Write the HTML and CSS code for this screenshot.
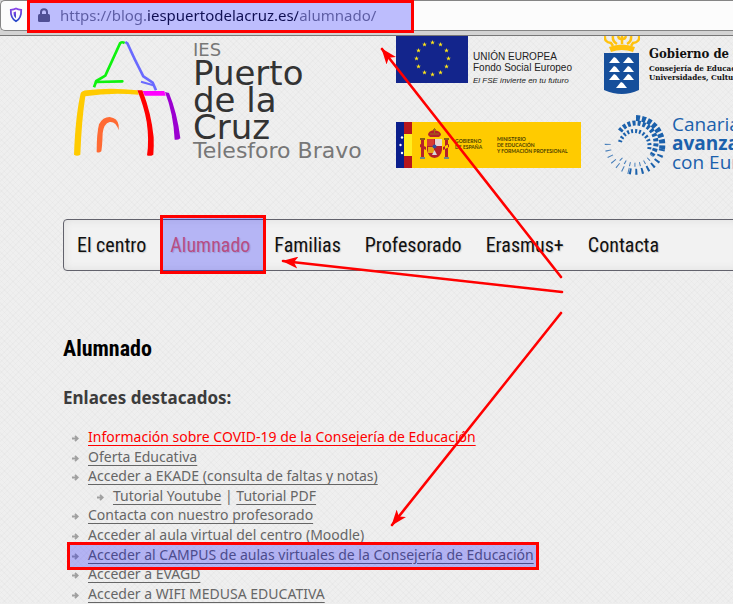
FILE: index.html
```html
<!DOCTYPE html>
<html lang="es">
<head>
<meta charset="utf-8">
<title>Alumnado - IES Puerto de la Cruz</title>
<link rel="stylesheet" href="styles.css">
</head>
<body>
<svg class="defs" aria-hidden="true">
  <symbol id="arrow" viewBox="0 0 7 7"><path d="M0 3.5H5.5M3 .8L5.8 3.5L3 6.2" fill="none" stroke="#a0a0a0" stroke-width="1.8"/></symbol>
  <symbol id="star" viewBox="-5 -5 10 10"><path d="M0-5L1.2-1.6H4.8L1.9.6L3 4L0 1.9L-3 4L-1.9.6L-4.8-1.6H-1.2Z" fill="#ffe619"/></symbol>
</svg>

<form class="toolbar">
  <div class="address">
    <svg class="shield" width="14" height="16" viewBox="0 0 14 16" aria-hidden="true"><defs><linearGradient id="sg" x2="0" y2="1"><stop stop-color="#8a45e8"/><stop offset="1" stop-color="#2448c8"/></linearGradient></defs><path d="M7 1.5C5.5 2.4 3.6 2.8 1.8 2.9C1.6 8.5 2.5 12 7 14.2C11.500 12 12.400 8.500 12.200 2.900C10.400 2.800 8.500 2.400 7 1.500Z" fill="none" stroke="url(#sg)" stroke-width="1.8"/><path d="M7 4.600V11.200C4.800 9.800 4.600 7.800 4.500 5.200Z" fill="url(#sg)"/></svg>
    <svg class="lock" width="12" height="14" viewBox="0 0 12 14" aria-hidden="true"><path d="M3 7V4.200a3 3 0 0 1 6 0V7" fill="none" stroke="#6a6a72" stroke-width="2"/><rect y="6" width="12" height="8" rx="1.500" fill="#6a6a72"/></svg>
    <input class="url" type="text" aria-label="Dirección" value="https://blog.iespuertodelacruz.es/alumnado/">
  </div>
</form>

<div class="page">
  <header class="site-header">
    <a class="brand" href="#">
      <svg width="110" height="121" viewBox="39 18 330 363" fill="none" aria-hidden="true">
        <path d="M194 39Q184 34 180 40L136 137L109 153L102 172" stroke="#0ef20e" stroke-width="8"/>
        <path d="M108 156L187 154" stroke="#0ef20e" stroke-width="8" stroke-linecap="round"/>
        <path d="M196 36L202 40Q224 90 250 139L278 158L288 181" stroke="#6a6aff" stroke-width="8"/>
        <path d="M243 155L280 166" stroke="#6a6aff" stroke-width="6"/>
        <path d="M42 374Q46 260 62 190Q66 182 80 181Q150 172 232 181L236 194Q150 186 76 199Q65 270 61 374Q51 380 42 374Z" fill="#ffcb00"/>
        <path d="M248 183H313L317 197H254Z" fill="#f0f"/>
        <path d="M232 181H247Q274 250 281 322Q282 350 280 374Q270 380 261 376Q268 330 260 275Q252 230 232 181Z" fill="red"/>
        <path d="M315 186L327 189Q352 250 361 325Q353 331 344 329Q340 250 315 186Z" fill="#9b00d0"/>
        <path d="M110 366Q110 310 117 283Q128 261 149 261Q173 264 176 286V301Q168 274 149 276Q131 281 128 310Q127 345 124 364Q117 370 110 366Z" fill="#ff6a33"/>
      </svg>
      <span class="brand-text">
        <span class="brand-top">IES</span>
        <span class="brand-big">Puerto<br>de la<br>Cruz</span>
        <span class="brand-sub">Telesforo Bravo</span>
      </span>
    </a>

    <div class="sponsors sponsors-a">
      <div class="eu">
        <svg width="72" height="47" viewBox="0 0 72 47" aria-hidden="true"><path fill="#13258c" d="M0 0H72V47H0Z"/>
          <g><use href="#star" x="34" y="4" width="5" height="5"/><use href="#star" x="42" y="6" width="5" height="5"/><use href="#star" x="48" y="12" width="5" height="5"/><use href="#star" x="50" y="20" width="5" height="5"/><use href="#star" x="48" y="28" width="5" height="5"/><use href="#star" x="42" y="34" width="5" height="5"/><use href="#star" x="34" y="36" width="5" height="5"/><use href="#star" x="26" y="34" width="5" height="5"/><use href="#star" x="20" y="28" width="5" height="5"/><use href="#star" x="18" y="20" width="5" height="5"/><use href="#star" x="20" y="12" width="5" height="5"/><use href="#star" x="26" y="6" width="5" height="5"/></g></svg>
        <div class="eu-text"><span>UNIÓN EUROPEA</span><span>Fondo Social Europeo</span><em>El FSE invierte en tu futuro</em></div>
      </div>
      <div class="ministry">
        <svg width="59" height="46" viewBox="0 0 59 46" aria-hidden="true">
          <path fill="#0a1e8c" d="M0 0H8V46H0Z"/><path fill="#b8161c" d="M8 0H16V46H8Z"/><path fill="#ffee20" d="M8 12H16V34H8Z"/>
          <g fill="#fff"><circle cx="6" cy="15.500" r="1.200"/><circle cx="4.500" cy="23" r="1.200"/><circle cx="6" cy="31" r="1.200"/></g>
          <g fill="#b5202a"><path d="M32 13Q32 9 38 8Q45 9 45 13L43 15H34Z"/><path d="M31 17H46V28Q45 35 38.500 36Q32 35 31 28Z"/><path d="M25 18H28V35H25ZM49 18H52V35H49ZM24 22L30 25V28L24 25ZM53 22L47 25V28L53 25Z"/></g>
          <path d="M31 17H38V24H31Z" fill="#d83b33"/><path d="M39 17H46V24H39Z" fill="#e6d5d2"/><path d="M32 25H38V31H32Z" fill="#e8a313"/><path d="M36 33L38.500 28L41 33Z" fill="#d8d9d5"/><circle cx="38.500" cy="24.500" r="2" fill="#314f9b"/>
          <path d="M34 12H43M38.500 6V11M37 7.500H40" stroke="#9b7312"/><path d="M24 17H29M48 17H53" stroke="#8b6010" stroke-width="2"/><path d="M24 36H29M48 36H53" stroke="#718c82" stroke-width="2"/>
        </svg>
        <span class="gov">GOBIERNO<br>DE ESPAÑA</span>
        <span>MINISTERIO<br>DE EDUCACIÓN<br>Y FORMACIÓN PROFESIONAL</span>
      </div>
    </div>

    <div class="sponsors sponsors-b">
      <div class="canarias">
        <svg width="36" height="58" viewBox="0 0 36 58" aria-hidden="true">
          <path d="M0 17H35V54Q18 62 0 54Z" fill="#164f9b"/>
          <path d="M5 11Q18 6 31 11L29 16Q18 12 7 16Z" fill="#ffc20e"/>
          <g fill="none" stroke="#ffc20e" stroke-width="2.500"><path d="M9 10L7 7Q0 6 1 0M13 8Q8 5 9 0M18 8V0M23 8Q28 5 27 0M27 10L29 7Q36 6 35 0M14 0Q15 3 17 3M22 0Q21 3 19 3"/></g>
          <g fill="#fff"><path id="isle" d="M5 27L10 21L12 22L16 27Z"/><use href="#isle" x="14"/><use href="#isle" y="9"/><use href="#isle" x="14" y="9"/><use href="#isle" y="17"/><use href="#isle" x="14" y="17"/><use href="#isle" x="7" y="25"/></g>
        </svg>
        <div class="canarias-text"><strong>Gobierno de Canarias</strong><span>Consejería de Educación,</span><span>Universidades, Cultura y Deportes</span></div>
      </div>
      <div class="avanza">
        <svg width="62" height="62" viewBox="-31 -31 62 62" fill="none" stroke="#1b61ac" aria-hidden="true">
          <path d="M1-27A27 27 0 0 1 27 4" stroke-width="6" stroke-dasharray="4 2"/>
          <path d="M27 4A27 27 0 0 1-6 26" stroke-width="6" stroke-dasharray="2 4"/>
          <path d="M-6 26A27 27 0 0 1-27-4" stroke-width="6" stroke-dasharray="1 5" opacity=".8"/>
          <path d="M-15-14A20 20 0 0 1 17 10" stroke-width="5" stroke-dasharray="3 2"/>
          <path d="M17 10A20 20 0 0 1-16 12" stroke-width="4" stroke-dasharray="1 4" opacity=".8"/>
          <path d="M-15-3A15 15 0 0 1 14 5" stroke-width="4" stroke-dasharray="2 2"/>
        </svg>
        <div class="avanza-text">Canarias<br><strong>avanza</strong><br>con Europa</div>
      </div>
    </div>
  </header>

  <nav class="menu">
    <a href="#">El centro</a>
    <a class="current" href="#">Alumnado</a>
    <a href="#">Familias</a>
    <a href="#">Profesorado</a>
    <a href="#">Erasmus+</a>
    <a href="#">Contacta</a>
  </nav>

  <main>
    <h1>Alumnado</h1>
    <h2>Enlaces destacados:</h2>
    <ul>
      <li><svg><use href="#arrow"/></svg><a class="alert" href="#">Información sobre COVID-19 de la Consejería de Educación</a></li>
      <li><svg><use href="#arrow"/></svg><a href="#">Oferta Educativa</a></li>
      <li><svg><use href="#arrow"/></svg><a href="#">Acceder a EKADE (consulta de faltas y notas)</a>
        <ul>
          <li><svg><use href="#arrow"/></svg><a href="#">Tutorial Youtube</a> | <a href="#">Tutorial PDF</a></li>
        </ul>
      </li>
      <li><svg><use href="#arrow"/></svg><a href="#">Contacta con nuestro profesorado</a></li>
      <li><svg><use href="#arrow"/></svg><a href="#">Acceder al aula virtual del centro (Moodle)</a></li>
      <li><svg><use href="#arrow"/></svg><a href="#">Acceder al CAMPUS de aulas virtuales de la Consejería de Educación</a></li>
      <li><svg><use href="#arrow"/></svg><a href="#">Acceder a EVAGD</a></li>
      <li><svg><use href="#arrow"/></svg><a href="#">Acceder a WIFI MEDUSA EDUCATIVA</a></li>
    </ul>
  </main>
</div>

<svg class="notes" width="733" height="604" viewBox="0 0 733 604" aria-hidden="true">
  <defs><marker id="head" viewBox="0 0 16 12" refX="15" refY="6" markerWidth="16" markerHeight="12" markerUnits="userSpaceOnUse" orient="auto"><path d="M16 6L0 0L4 6L0 12Z" fill="red"/></marker></defs>
  <g fill="#00f" fill-opacity=".25" stroke="red" stroke-width="3"><path d="M28.500 1.500H412.500V31.500H28.500Z"/><path d="M161.500 216.500H264.500V272.500H161.500Z"/><path d="M68.500 543.500H537.500V568.500H68.500Z"/></g>
  <g stroke="red" stroke-width="2.600" stroke-linecap="round"><path d="M561 277L382 49" marker-end="url(#head)"/><path d="M562 292L283 261" marker-end="url(#head)"/><path d="M561 313L392 525" marker-end="url(#head)"/></g>
</svg>
</body>
</html>
```
FILE: styles.css
```css
* { box-sizing: border-box; }

body {
  margin: 0;
  position: relative;
  overflow: hidden;
  background: #eee;
  color: #444;
  font-family: "Noto Sans", sans-serif;
}

.defs { position: absolute; width: 0; height: 0; }

.toolbar {
  height: 36px;
  background: #d3d3d3;
  border-bottom: 1px solid #777;
}

.address {
  display: flex;
  align-items: center;
  height: 31px;
  padding-left: 8px;
  background: #fcfcfc;
  border: 1px solid #858585;
  border-right: 0;
  border-radius: 5px 0 0 5px;
}

.shield { margin-top: -2px; }
.lock { margin: -2px 9px 0 15px; }

.url {
  flex: 1;
  min-width: 0;
  padding: 0 0 2px 1px;
  border: 0;
  outline: 0;
  font: 15px "Noto Sans", sans-serif;
  color: transparent;
  background: linear-gradient(90deg, #7b7b84 88px, #15141a 88px 239px, #7b7b84 239px);
  -webkit-background-clip: text;
  background-clip: text;
}

.page {
  overflow: hidden;
  padding-left: 63px;
  background:
    repeating-linear-gradient(45deg, #00000004 0 1px, transparent 1px 4px),
    repeating-linear-gradient(-45deg, #00000004 0 1px, transparent 1px 4px),
    #efefef;
}

.site-header { display: flex; height: 183px; }

.brand {
  display: flex;
  flex: 0 0 333px;
  gap: 10px;
  padding-left: 10px;
  text-decoration: none;
  font-family: "DejaVu Sans", sans-serif;
  white-space: nowrap;
}

.brand-text { display: flex; flex-direction: column; padding-top: 4px; color: #777; }
.brand-top { font-size: 18px; line-height: 20px; }
.brand-big { font-size: 34px; line-height: 27px; color: #333; }
.brand-sub { font-size: 22px; line-height: 20px; }

.sponsors { display: flex; flex-direction: column; flex: none; white-space: nowrap; }
.sponsors-a { width: 185px; gap: 36px; margin-right: 23px; }
.sponsors-b { gap: 20px; }

.eu { display: flex; gap: 5px; }
.eu-text {
  display: flex;
  flex-direction: column;
  padding-top: 15px;
  color: #222;
  font: 10px/11px "Liberation Sans", sans-serif;
}
.eu-text em { margin-top: 2px; font-size: 8px; }

.ministry {
  display: flex;
  align-items: center;
  background: #ffcb00;
  color: #4c3d00;
  font: bold 5px/6px Lato, sans-serif;
}
.gov { width: 42px; align-self: flex-start; padding-top: 16px; }

.canarias { display: flex; gap: 9px; }
.canarias-text {
  display: flex;
  flex-direction: column;
  padding-top: 8px;
  color: #111;
  font: bold 8px/9px "DejaVu Serif Condensed", "Liberation Serif", serif;
}
.canarias-text strong { font-size: 13px; line-height: 20px; }

.avanza { display: flex; gap: 6px; color: #1b61ac; }
.avanza-text { font: 19px/19px "Open Sans", sans-serif; padding-top: 1px; }

.menu {
  display: flex;
  align-items: center;
  gap: 24px;
  height: 52px;
  margin-right: -8px;
  padding-left: 13px;
  background: #f2f2f2;
  border: 1px solid #62626c;
  border-radius: 4px;
  box-shadow: inset 0 0 8px #ddd;
}
.menu a {
  color: #111;
  text-decoration: none;
  font: 20px "Roboto Condensed", "Liberation Sans Narrow", sans-serif;
  text-shadow: 1px 1px 1px #ccc;
}
.menu .current { color: #f4685a; }

h1 {
  margin: 64px 0 0;
  color: #000;
  font: bold 22px/28px "Roboto Condensed", "Liberation Sans Narrow", sans-serif;
}
h2 { margin: 22px 0 16px; font-size: 17px; line-height: 26px; color: #3c3c3c; }

ul { margin: 0; padding: 0 0 0 25px; list-style: none; }
main { font-size: 14px; line-height: 1.4; white-space: nowrap; color: #666; }
li svg { width: 7px; height: 7px; margin: 0 9px 0 -16px; }
li a { color: #666; text-underline-offset: 3px; }
li .alert { color: #f00; }

.notes { position: absolute; top: 0; left: 0; pointer-events: none; }
```
